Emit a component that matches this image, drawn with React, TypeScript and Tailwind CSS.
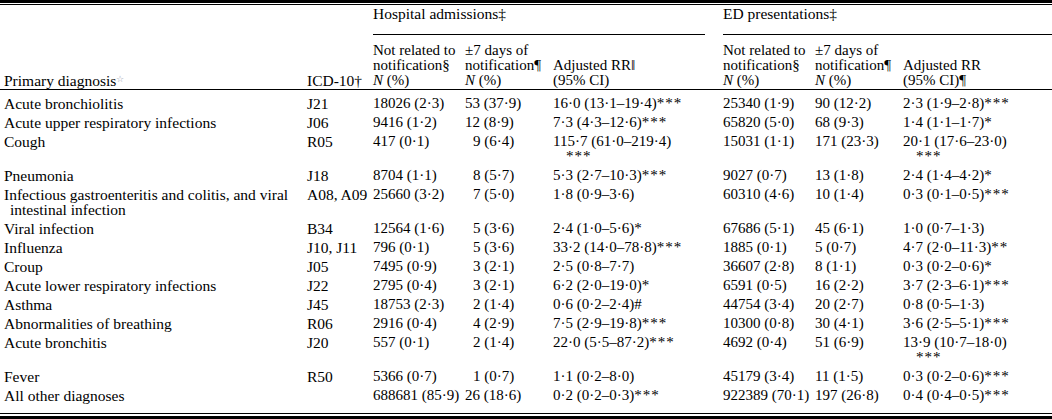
import React from "react";

type Row = {
  name: string[];
  icd: string;
  hNot: string;
  h7: string;
  h7pad?: boolean;
  hRR: string[];
  eNot: string;
  e7: string;
  eRR: string[];
};

const rows: Row[] = [
  { name: ["Acute bronchiolitis"], icd: "J21", hNot: "18026 (2·3)", h7: "53 (37·9)", hRR: ["16·0 (13·1–19·4)***"], eNot: "25340 (1·9)", e7: "90 (12·2)", eRR: ["2·3 (1·9–2·8)***"] },
  { name: ["Acute upper respiratory infections"], icd: "J06", hNot: "9416 (1·2)", h7: "12 (8·9)", hRR: ["7·3 (4·3–12·6)***"], eNot: "65820 (5·0)", e7: "68 (9·3)", eRR: ["1·4 (1·1–1·7)*"] },
  { name: ["Cough"], icd: "R05", hNot: "417 (0·1)", h7: "9 (6·4)", h7pad: true, hRR: ["115·7 (61·0–219·4)", "***"], eNot: "15031 (1·1)", e7: "171 (23·3)", eRR: ["20·1 (17·6–23·0)", "***"] },
  { name: ["Pneumonia"], icd: "J18", hNot: "8704 (1·1)", h7: "8 (5·7)", h7pad: true, hRR: ["5·3 (2·7–10·3)***"], eNot: "9027 (0·7)", e7: "13 (1·8)", eRR: ["2·4 (1·4–4·2)*"] },
  { name: ["Infectious gastroenteritis and colitis, and viral", "intestinal infection"], icd: "A08, A09", hNot: "25660 (3·2)", h7: "7 (5·0)", h7pad: true, hRR: ["1·8 (0·9–3·6)"], eNot: "60310 (4·6)", e7: "10 (1·4)", eRR: ["0·3 (0·1–0·5)***"] },
  { name: ["Viral infection"], icd: "B34", hNot: "12564 (1·6)", h7: "5 (3·6)", h7pad: true, hRR: ["2·4 (1·0–5·6)*"], eNot: "67686 (5·1)", e7: "45 (6·1)", eRR: ["1·0 (0·7–1·3)"] },
  { name: ["Influenza"], icd: "J10, J11", hNot: "796 (0·1)", h7: "5 (3·6)", h7pad: true, hRR: ["33·2 (14·0–78·8)***"], eNot: "1885 (0·1)", e7: "5 (0·7)", eRR: ["4·7 (2·0–11·3)**"] },
  { name: ["Croup"], icd: "J05", hNot: "7495 (0·9)", h7: "3 (2·1)", h7pad: true, hRR: ["2·5 (0·8–7·7)"], eNot: "36607 (2·8)", e7: "8 (1·1)", eRR: ["0·3 (0·2–0·6)*"] },
  { name: ["Acute lower respiratory infections"], icd: "J22", hNot: "2795 (0·4)", h7: "3 (2·1)", h7pad: true, hRR: ["6·2 (2·0–19·0)*"], eNot: "6591 (0·5)", e7: "16 (2·2)", eRR: ["3·7 (2·3–6·1)***"] },
  { name: ["Asthma"], icd: "J45", hNot: "18753 (2·3)", h7: "2 (1·4)", h7pad: true, hRR: ["0·6 (0·2–2·4)#"], eNot: "44754 (3·4)", e7: "20 (2·7)", eRR: ["0·8 (0·5–1·3)"] },
  { name: ["Abnormalities of breathing"], icd: "R06", hNot: "2916 (0·4)", h7: "4 (2·9)", h7pad: true, hRR: ["7·5 (2·9–19·8)***"], eNot: "10300 (0·8)", e7: "30 (4·1)", eRR: ["3·6 (2·5–5·1)***"] },
  { name: ["Acute bronchitis"], icd: "J20", hNot: "557 (0·1)", h7: "2 (1·4)", h7pad: true, hRR: ["22·0 (5·5–87·2)***"], eNot: "4692 (0·4)", e7: "51 (6·9)", eRR: ["13·9 (10·7–18·0)", "***"] },
  { name: ["Fever"], icd: "R50", hNot: "5366 (0·7)", h7: "1 (0·7)", h7pad: true, hRR: ["1·1 (0·2–8·0)"], eNot: "45179 (3·4)", e7: "11 (1·5)", eRR: ["0·3 (0·2–0·6)***"] },
  { name: ["All other diagnoses"], icd: "", hNot: "688681 (85·9)", h7: "26 (18·6)", hRR: ["0·2 (0·2–0·3)***"], eNot: "922389 (70·1)", e7: "197 (26·8)", eRR: ["0·4 (0·4–0·5)***"] },
];

const grid = "grid grid-cols-[307px_66px_92px_88px_170px_92px_88px_149px]";

// split trailing significance marks so they can be spaced out
const Num = ({ text }: { text: string }) => {
  const m = text.match(/^(.*?)(\*+|#)?$/);
  const body = m ? m[1] : text;
  const stars = m && m[2] ? m[2] : "";
  return (
    <>
      {body}
      {stars && <span className="tracking-[1px]">{stars}</span>}
    </>
  );
};

// multi-line cell, second line hangs a little to the right
const Lines = ({ lines, indent }: { lines: string[]; indent: string }) => (
  <>
    {lines.map((l, i) => (
      <div key={i} className={i > 0 ? indent : ""}>
        <Num text={l} />
      </div>
    ))}
  </>
);

const NPct = () => (
  <div>
    <span className="italic">N</span> (%)
  </div>
);

const sub = "row-start-2 pt-[8px] pb-[1px] text-[15px]";

export default function App() {
  return (
    <div className="w-[1052px] h-[419px] overflow-hidden flex flex-col bg-white text-black font-['Liberation_Serif',serif] text-[15.5px] leading-[15px]">
      {/* top double rule */}
      <div className="h-[3px] shrink-0 bg-black" />
      <div className="h-[1px] shrink-0" />
      <div className="h-[1px] shrink-0 bg-black" />

      {/* header */}
      <div className={`${grid} shrink-0 grid-rows-[30px_auto] border-b border-black`}>
        <div className="col-start-1 row-start-1 row-span-2 self-end pl-[4px] pb-[1px]">
          Primary diagnosis<sup className="text-[9px] text-gray-400">☆</sup>
        </div>
        <div className="col-start-2 row-start-1 row-span-2 self-end pb-[1px]">ICD-10†</div>

        <div className="col-start-3 col-span-3 row-start-1 mr-[18px] pt-[1px] border-b border-black">
          Hospital admissions‡
        </div>
        <div className="col-start-6 col-span-3 row-start-1 pt-[1px] border-b border-black">
          ED presentations‡
        </div>

        <div className={`col-start-3 ${sub}`}>
          <div>Not related to</div>
          <div>notification§</div>
          <NPct />
        </div>
        <div className={`col-start-4 ${sub}`}>
          <div>±7 days of</div>
          <div>notification¶</div>
          <NPct />
        </div>
        <div className={`col-start-5 ${sub} flex flex-col justify-end`}>
          <div>Adjusted RR‖</div>
          <div>(95% CI)</div>
        </div>
        <div className={`col-start-6 ${sub}`}>
          <div>Not related to</div>
          <div>notification§</div>
          <NPct />
        </div>
        <div className={`col-start-7 ${sub}`}>
          <div>±7 days of</div>
          <div>notification¶</div>
          <NPct />
        </div>
        <div className={`col-start-8 ${sub} flex flex-col justify-end`}>
          <div>Adjusted RR</div>
          <div>(95% CI)¶</div>
        </div>
      </div>

      {/* body */}
      <div className={`${grid} min-h-0 pt-[4px]`}>
        {rows.map((r, i) => (
          <React.Fragment key={i}>
            <div className="pl-[4px] py-[2px]">
              <Lines lines={r.name} indent="pl-[6px]" />
            </div>
            <div className="py-[2px]">{r.icd}</div>
            <div className="py-[2px] text-[15px]">{r.hNot}</div>
            <div className={`py-[2px] text-[15px] ${r.h7pad ? "pl-[8px]" : ""}`}>{r.h7}</div>
            <div className="py-[2px] text-[15px]">
              <Lines lines={r.hRR} indent="pl-[13px]" />
            </div>
            <div className="py-[2px] text-[15px]">{r.eNot}</div>
            <div className="py-[2px] text-[15px]">{r.e7}</div>
            <div className="py-[2px] text-[15px]">
              <Lines lines={r.eRR} indent="pl-[13px]" />
            </div>
          </React.Fragment>
        ))}
      </div>

      {/* bottom double rule */}
      <div className="mt-auto h-[1px] shrink-0 bg-black" />
      <div className="h-[2px] shrink-0" />
      <div className="h-[3px] shrink-0 bg-black" />
    </div>
  );
}
